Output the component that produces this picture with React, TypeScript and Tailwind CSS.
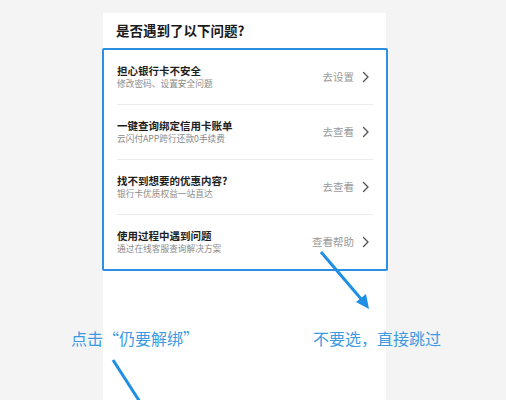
import React from "react";

// Help-prompt card with tutorial annotations drawn over it
const rows = [
  { title: "担心银行卡不安全", sub: "修改密码、设置安全问题", action: "去设置" },
  { title: "一键查询绑定信用卡账单", sub: "云闪付APP跨行还款0手续费", action: "去查看" },
  { title: "找不到想要的优惠内容?", sub: "银行卡优质权益一站直达", action: "去查看" },
  { title: "使用过程中遇到问题", sub: "通过在线客服查询解决方案", action: "查看帮助" },
];

const Chevron = () => (
  <svg width="8" height="12" viewBox="0 0 8 12" fill="none">
    <path d="M1.5 1.5 L6 6 L1.5 10.5" stroke="#555" strokeWidth="1.4" strokeLinecap="round" strokeLinejoin="round" />
  </svg>
);

const App: React.FC = () => {
  return (
    <div
      className="relative w-[506px] h-[400px] overflow-hidden bg-[#f4f4f4] flex"
      style={{ fontFamily: '"Noto Sans CJK SC", "Noto Sans", sans-serif' }}
    >
      {/* white page panel */}
      <div className="ml-[103px] mt-[13px] w-[283px] bg-white flex flex-col">
        <div className="pt-[7px] pl-[13px] text-[13.5px] leading-[20px] font-bold text-[#1a1a1a]">
          是否遇到了以下问题?
        </div>

        <div className="mt-[8px] -ml-[1px] w-[286px] border-2 border-[#2d8fe2] rounded-[2px] flex flex-col">
          {rows.map((r, i) => (
            <div key={i} className="flex flex-col px-[13px]">
              <div className="h-[54px] flex items-center justify-between">
                <div className="flex flex-col">
                  <span className="text-[10.5px] leading-[13px] font-bold text-[#1f1f1f]">{r.title}</span>
                  <span className="text-[8.7px] leading-[12px] text-[#8a8a8a] mt-[1px]">{r.sub}</span>
                </div>
                <div className="flex items-center gap-[8px] pr-[3px]">
                  <span className="text-[10.5px] text-[#9a9a9a]">{r.action}</span>
                  <Chevron />
                </div>
              </div>
              {i < rows.length - 1 && <div className="h-px bg-[#ececec]" />}
            </div>
          ))}
        </div>
      </div>

      {/* annotations */}
      <svg className="absolute inset-0" width="506" height="400" viewBox="0 0 506 400">
        <line x1="321" y1="252" x2="362" y2="300" stroke="#1f8fe4" strokeWidth="3" />
        <polygon points="369,309 356,302 366,294" fill="#1f8fe4" />
        <line x1="113" y1="360" x2="140" y2="402" stroke="#1f8fe4" strokeWidth="3" />
      </svg>
      <div className="absolute left-[71px] top-[327px] text-[16px] leading-[22px] text-[#3a9ae2]">
        点击“仍要解绑”
      </div>
      <div className="absolute left-[313px] top-[327px] text-[16px] leading-[22px] text-[#3a9ae2]">
        不要选，直接跳过
      </div>
    </div>
  );
};

export default App;
